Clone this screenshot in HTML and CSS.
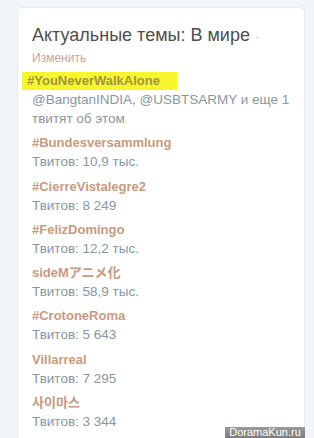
FILE: index.html
```html
<!DOCTYPE html>
<html lang="ru">
<head>
  <meta charset="UTF-8" />
  <title>Актуальные темы</title>
  <link rel="stylesheet" href="styles.css">
</head>
<body>
  <div class="trends-card">
    <div class="trends-header">
      <h3 class="trends-title">Актуальные темы: В мире <span class="dot">·</span></h3>
      <a class="trends-change">Изменить</a>
    </div>
    <ul class="trend-list">
      <li class="trend">
        <span class="trend-name"><span class="highlight">#YouNeverWalkAlone</span></span>
        <span class="trend-meta">@BangtanINDIA, @USBTSARMY и еще 1 твитят об этом</span>
      </li>
      <li class="trend">
        <span class="trend-name">#Bundesversammlung</span>
        <span class="trend-meta">Твитов: 10,9 тыс.</span>
      </li>
      <li class="trend">
        <span class="trend-name">#CierreVistalegre2</span>
        <span class="trend-meta">Твитов: 8 249</span>
      </li>
      <li class="trend">
        <span class="trend-name">#FelizDomingo</span>
        <span class="trend-meta">Твитов: 12,2 тыс.</span>
      </li>
      <li class="trend">
        <span class="trend-name">sideMアニメ化</span>
        <span class="trend-meta">Твитов: 58,9 тыс.</span>
      </li>
      <li class="trend">
        <span class="trend-name">#CrotoneRoma</span>
        <span class="trend-meta">Твитов: 5 643</span>
      </li>
      <li class="trend">
        <span class="trend-name">Villarreal</span>
        <span class="trend-meta">Твитов: 7 295</span>
      </li>
      <li class="trend">
        <span class="trend-name">사이마스</span>
        <span class="trend-meta">Твитов: 3 344</span>
      </li>
    </ul>
  </div>
  <div class="watermark">DoramaKun.ru</div>
</body>
</html>
```

FILE: styles.css
```css
* {
  box-sizing: border-box;
  margin: 0;
  padding: 0;
}

body {
  background: #f3f6f9;
  font-family: "Liberation Sans", Arial, "Noto Sans CJK JP", "Noto Sans CJK KR", sans-serif;
  padding: 7px 10px 0 17px;
  height: 438px;
  overflow: hidden;
}

.trends-card {
  background: #ffffff;
  border: 1px solid #e6ebef;
  border-radius: 5px;
  width: 288px;
  padding: 16px 14px 20px 14px;
  min-height: 460px;
}

.trends-header {
  margin-bottom: 6px;
}

.trends-title {
  font-size: 18px;
  font-weight: normal;
  color: #4e4e4e;
  line-height: 22px;
}

.trends-title .dot {
  font-size: 12px;
  color: #b0b8bf;
}

.trends-change {
  display: block;
  font-size: 12px;
  color: #c9a49a;
  margin-top: 2px;
  line-height: 16px;
}

.trend-list {
  list-style: none;
}

.trend {
  margin-bottom: 6.3px;
}

.trend-name {
  display: block;
  font-size: 13px;
  font-weight: bold;
  color: #c89a80;
  line-height: 18px;
  height: 18px;
}

.highlight {
  display: inline-block;
  background: #f6f62c;
  color: #a49244;
  padding: 0 17px 0 5px;
  margin-left: -10px;
}

.trend-meta {
  display: block;
  font-size: 13.5px;
  color: #8a96a0;
  line-height: 19px;
}

.watermark {
  position: absolute;
  left: 225px;
  top: 427px;
  width: 80px;
  height: 11px;
  background: linear-gradient(#9a9a9a, #7d7d7d);
  color: #ffffff;
  font-size: 11px;
  line-height: 11px;
  text-align: center;
}
```
